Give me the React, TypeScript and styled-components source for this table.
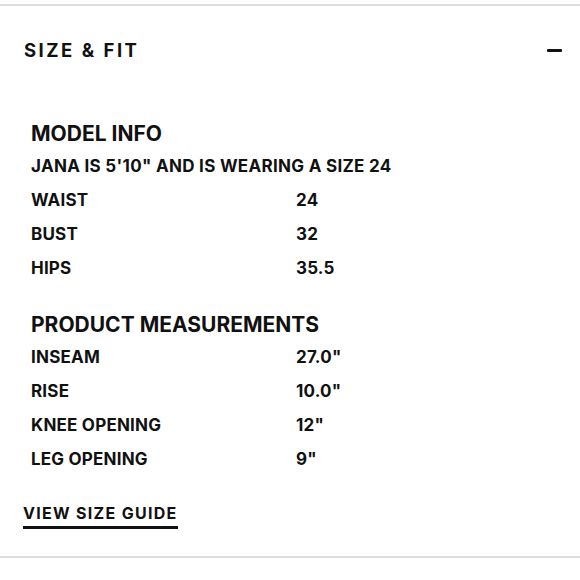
import styled, { createGlobalStyle } from 'styled-components';

const GlobalStyle = createGlobalStyle`
  body {
    margin: 0;
    background: #fff;
    color: #111;
    font-family: Inter, 'Noto Sans', sans-serif;
  }
`;

interface IRow {
  label: string;
  value: string;
}

const modelRows: IRow[] = [
  { label: 'WAIST', value: '24' },
  { label: 'BUST', value: '32' },
  { label: 'HIPS', value: '35.5' },
];

const productRows: IRow[] = [
  { label: 'INSEAM', value: '27.0"' },
  { label: 'RISE', value: '10.0"' },
  { label: 'KNEE OPENING', value: '12"' },
  { label: 'LEG OPENING', value: '9"' },
];

export default function App() {
  return (
    <Page>
      <GlobalStyle />
      <Section>
        <Header>
          <Title>SIZE &amp; FIT</Title>
          <Toggle aria-label="collapse" />
        </Header>
        <Body>
          <Group>
            <Heading>MODEL INFO</Heading>
            <Note>JANA IS 5'10" AND IS WEARING A SIZE 24</Note>
            <Table>
              {modelRows.map((row) => (
                <Row key={row.label}>
                  <Cell>{row.label}</Cell>
                  <Cell>{row.value}</Cell>
                </Row>
              ))}
            </Table>
          </Group>
          <Group>
            <Heading>PRODUCT MEASUREMENTS</Heading>
            <Table>
              {productRows.map((row) => (
                <Row key={row.label}>
                  <Cell>{row.label}</Cell>
                  <Cell>{row.value}</Cell>
                </Row>
              ))}
            </Table>
          </Group>
          <GuideLink href="#">VIEW SIZE GUIDE</GuideLink>
        </Body>
      </Section>
    </Page>
  );
}

const Page = styled.div`
  padding-top: 4px;
`;

const Section = styled.section`
  border-top: 2px solid #dedede;
  border-bottom: 2px solid #dedede;
`;

const Header = styled.div`
  height: 88px;
  display: flex;
  align-items: center;
  justify-content: space-between;
  padding: 0 18px 0 24px;
`;

const Title = styled.h2`
  margin: 0;
  font-size: 18.5px;
  font-weight: 700;
  letter-spacing: 2.5px;
  line-height: 1;
  padding-top: 1px;
`;

const Toggle = styled.span`
  display: block;
  width: 15px;
  height: 3px;
  background: #111;
  border-radius: 1px;
`;

const Body = styled.div`
  padding: 25px 31px 27px;
  display: flex;
  flex-direction: column;
  gap: 25px;
`;

const Group = styled.div`
  display: flex;
  flex-direction: column;
`;

const Heading = styled.h3`
  margin: 0;
  font-size: 21px;
  font-weight: 700;
  line-height: 30px;
`;

const Note = styled.p`
  margin: 0;
  font-size: 17px;
  font-weight: 700;
  letter-spacing: 0.3px;
  line-height: 34px;
`;

const Table = styled.div`
  display: flex;
  flex-direction: column;
`;

const Row = styled.div`
  display: grid;
  grid-template-columns: 265px 1fr;
  height: 34px;
  align-items: center;
`;

const Cell = styled.span`
  font-size: 17px;
  font-weight: 700;
  letter-spacing: 0.2px;
`;

const GuideLink = styled.a`
  align-self: flex-start;
  margin: 2px 0 0 -8px;
  padding-bottom: 3px;
  border-bottom: 3px solid #111;
  color: #111;
  text-decoration: none;
  font-size: 16px;
  font-weight: 700;
  letter-spacing: 1.3px;
  line-height: 20px;
`;
